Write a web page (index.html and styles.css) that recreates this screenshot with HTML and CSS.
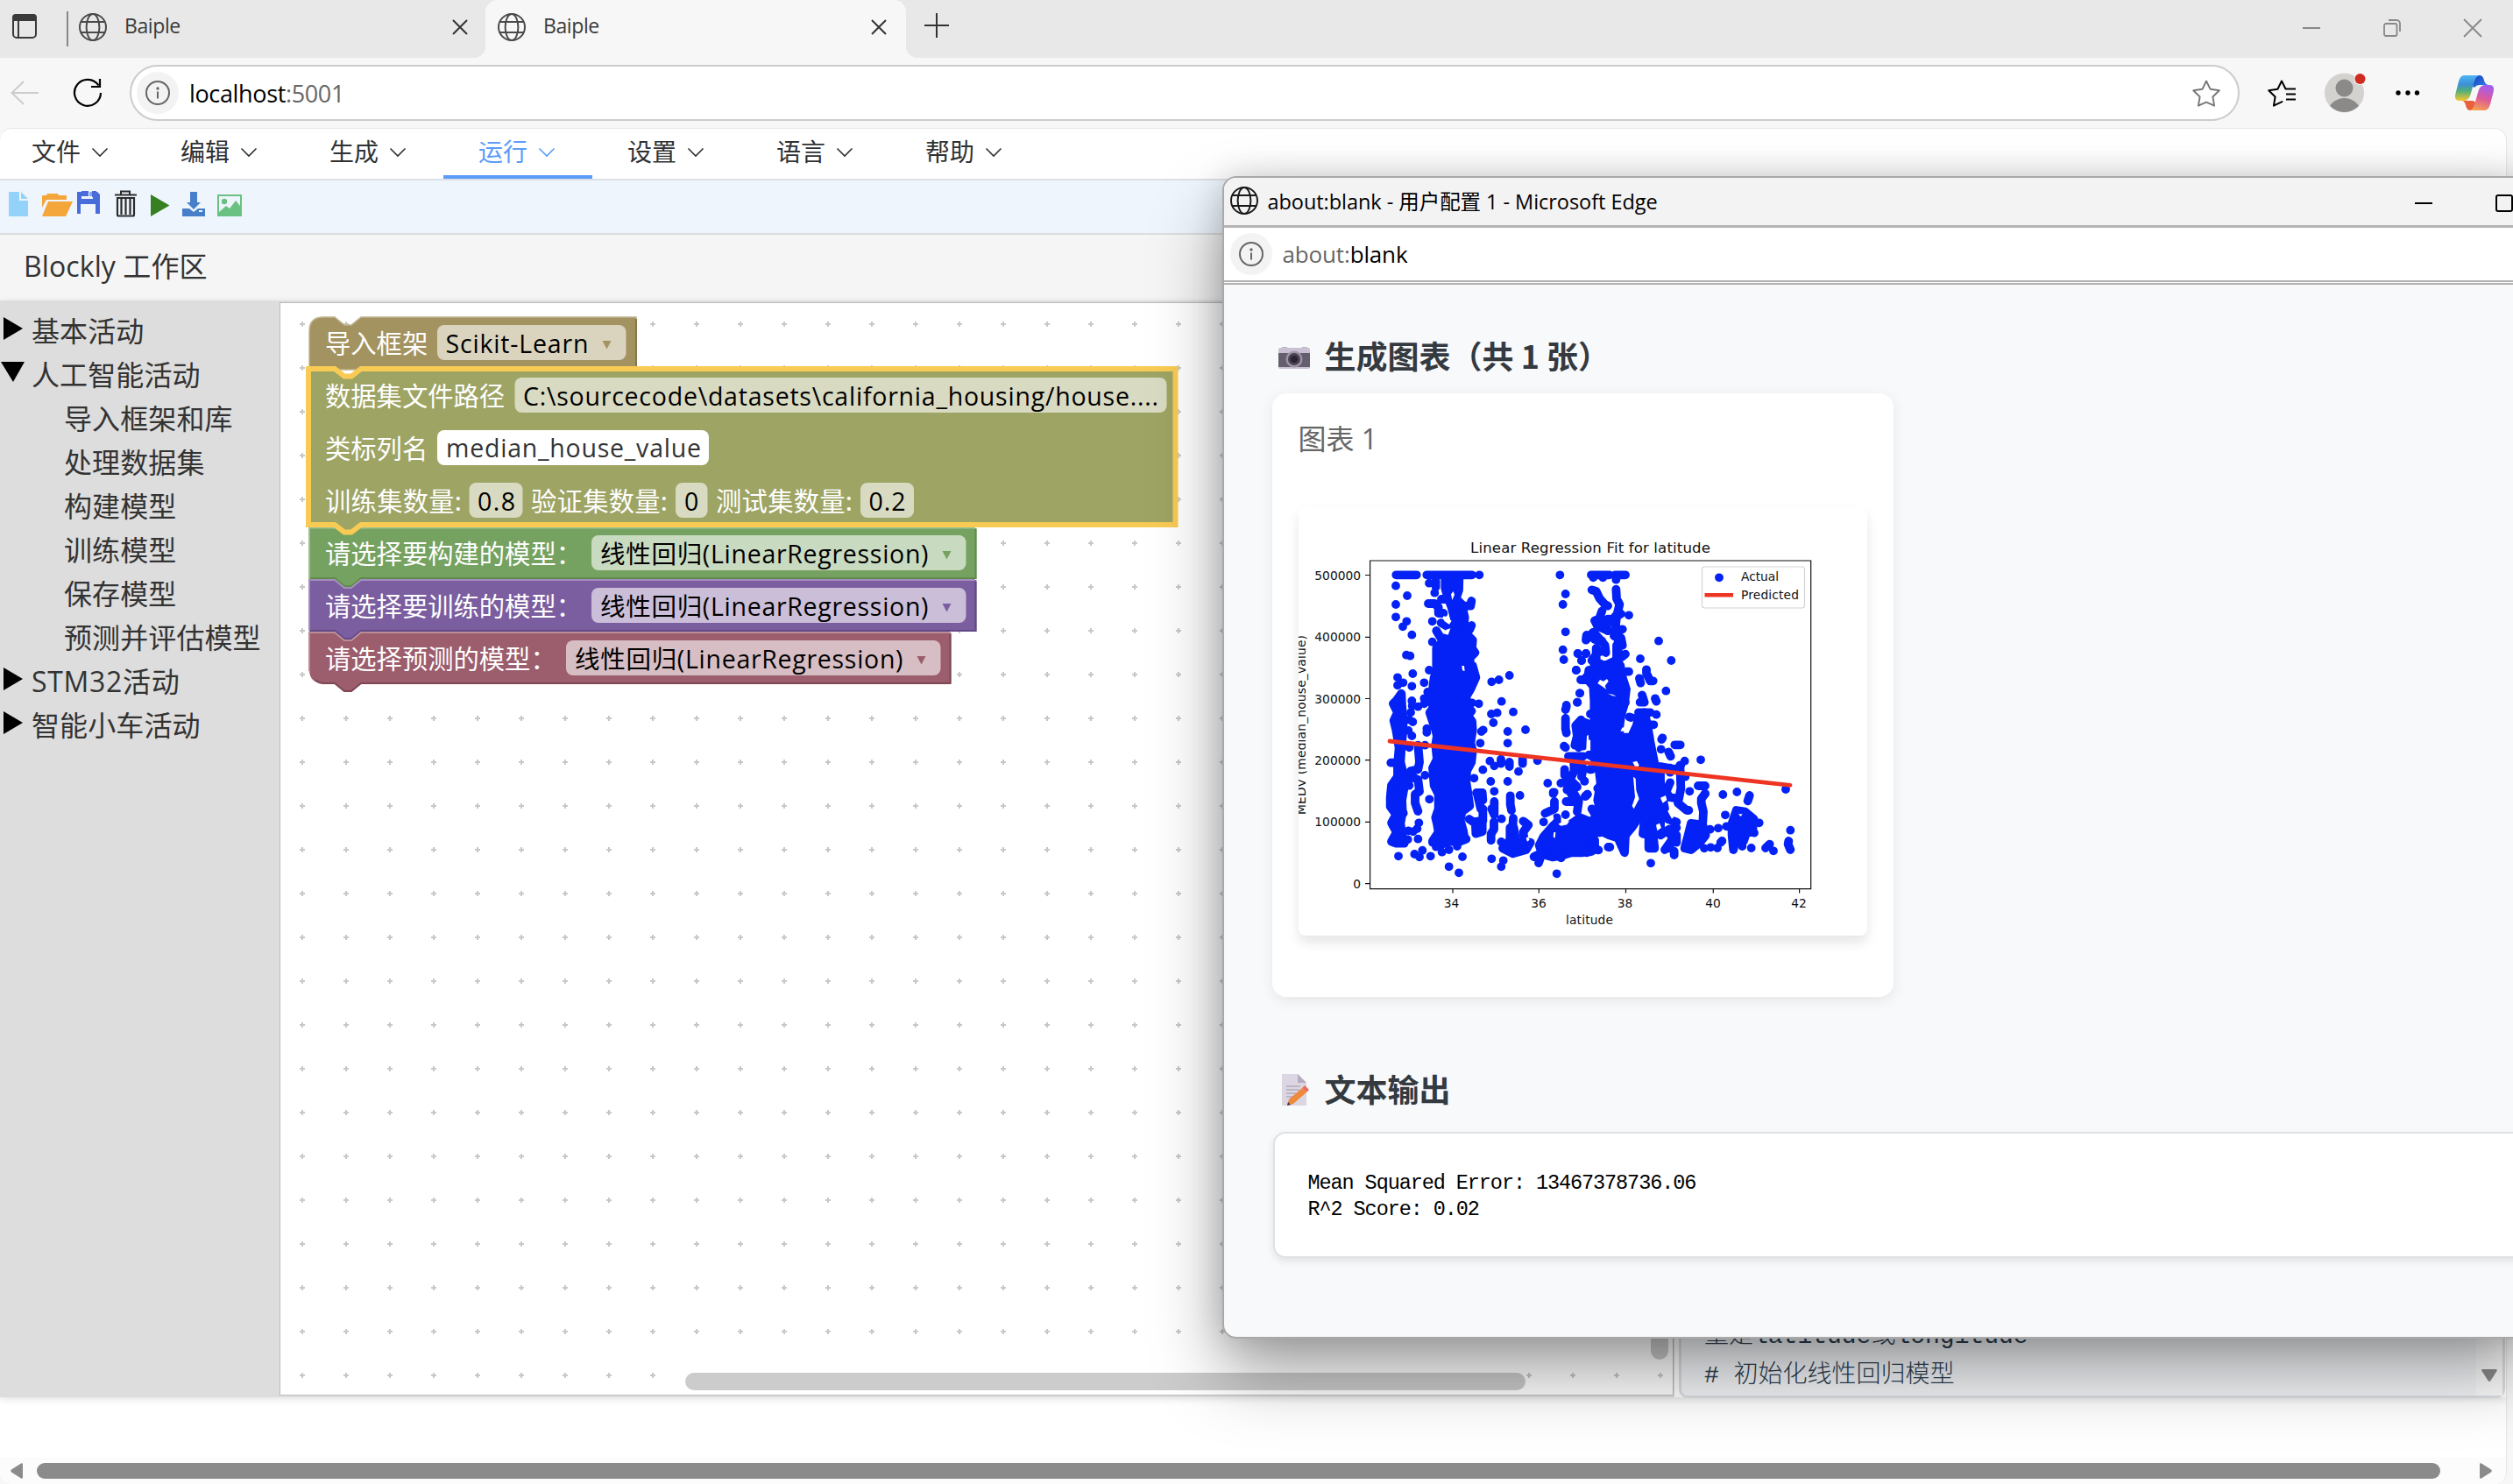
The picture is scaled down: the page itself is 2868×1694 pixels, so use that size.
FILE: index.html
```html
<!DOCTYPE html>
<html lang="zh-CN">
<head>
<meta charset="utf-8">
<title>Baiple</title>
<link rel="stylesheet" href="styles.css">
</head>
<body>
<svg class="defs" width="0" height="0" aria-hidden="true">
  <defs>
    <symbol id="globe" viewBox="0 0 32 32"><g fill="none" stroke="currentColor" stroke-width="2"><circle cx="16" cy="16" r="15"/><ellipse cx="16" cy="16" rx="7.4" ry="15"/><path d="M2.5 10h27M2.5 22h27"/></g></symbol>
    <symbol id="close" viewBox="0 0 20 20"><path d="M2 2l16 16M18 2L2 18" fill="none" stroke="currentColor" stroke-width="2"/></symbol>
    <symbol id="chev" viewBox="0 0 20 12"><path d="M1.5 1.5L10 10l8.500-8.500" fill="none" stroke="currentColor" stroke-width="1.600"/></symbol>
    <symbol id="info" viewBox="0 0 28 28"><circle cx="14" cy="14" r="13" fill="none" stroke="#666" stroke-width="2"/><circle cx="14" cy="9" r="1.700" fill="#666"/><path d="M14 12.500v8" stroke="#666" stroke-width="2"/></symbol>
  </defs>
</svg>
<div class="browser">
  <div class="tabstrip">
    <svg class="tabmenu" viewBox="0 0 28 28"><rect x="1" y="1" width="26" height="26" rx="4" fill="none" stroke="#3a3a3a" stroke-width="2"/><path d="M0 8V4a4 4 0 0 1 4-4h20a4 4 0 0 1 4 4v4z" fill="#3a3a3a"/><path d="M7 8v19" stroke="#3a3a3a" stroke-width="2"/></svg>
    <div class="tabrule"></div>
    <div class="tab first"><svg class="globe"><use href="#globe"/></svg><span>Baiple</span><svg class="x"><use href="#close"/></svg></div>
    <div class="tab active"><svg class="globe"><use href="#globe"/></svg><span>Baiple</span><svg class="x"><use href="#close"/></svg></div>
    <svg class="plus" viewBox="0 0 28 28"><path d="M14 0v28M0 14h28" stroke="#333" stroke-width="2"/></svg>
    <div class="winbtns">
      <svg viewBox="0 0 20 20"><path d="M0 10h20" stroke="#888" stroke-width="2"/></svg>
      <svg viewBox="0 0 20 20"><g fill="none" stroke="#888" stroke-width="1.800"><rect x="1" y="5" width="14.500" height="14" rx="2"/><path d="M6 1h9a4 4 0 0 1 4 4v9"/></g></svg>
      <svg viewBox="0 0 20 20"><path d="M0 0l20 20M20 0L0 20" stroke="#888" stroke-width="1.800"/></svg>
    </div>
  </div>
  <div class="navbar">
    <svg class="back" viewBox="0 0 32 28"><path d="M15 1L1.500 14 15 27M1.500 14H32" fill="none" stroke="#ccc" stroke-width="2"/></svg>
    <svg class="reload" viewBox="0 0 34 34"><path d="M32 17A15 15 0 1 1 29.500 8.500" fill="none" stroke="#000" stroke-width="2.200"/><path d="M31 1v9h-10" fill="none" stroke="#000" stroke-width="2.200"/></svg>
    <div class="omnibox">
      <div class="infodot"><svg><use href="#info"/></svg></div>
      <span class="url">localhost<em>:5001</em></span>
      <svg class="star" viewBox="0 0 32 31"><path d="M16 1.500l4.600 9.300 10.200 1.500-7.400 7.200 1.700 10.200L16 25.600l-9.100 4.100 1.700-10.200-7.400-7.200 10.200-1.500z" fill="none" stroke="#777" stroke-width="1.900" stroke-linejoin="round"/></svg>
    </div>
    <svg class="favs" viewBox="0 0 32 31"><path d="M20.500 10.500L16 1.500l-4.600 9.300-10.200 1.500 7.400 7.200-1.700 10.200 9.500-4.600" fill="none" stroke="#000" stroke-width="2" stroke-linejoin="round" stroke-linecap="round"/><path d="M21 10.500h11M21 16.500h11M21 22.500h11" stroke="#000" stroke-width="2"/></svg>
    <svg class="avatar" viewBox="0 0 48 46"><defs><clipPath id="av"><circle cx="22.500" cy="23" r="22"/></clipPath></defs><circle cx="22.500" cy="23" r="22.500" fill="#d3d2ce"/><circle cx="22.500" cy="17.500" r="10" fill="#8b8a88"/><ellipse cx="22.500" cy="44" rx="18" ry="15" fill="#8b8a88" clip-path="url(#av)"/><circle cx="40.500" cy="7" r="7" fill="#f7f7f7"/><circle cx="40.500" cy="7" r="6" fill="#cf2b20"/></svg>
    <svg class="dots" viewBox="0 0 28 8"><circle cx="3" cy="4" r="2.700"/><circle cx="14" cy="4" r="2.700"/><circle cx="24.500" cy="4" r="2.700"/></svg>
    <svg class="copilot" viewBox="0 0 44 40">
      <defs>
        <linearGradient id="c1" x1="0" y1="0" x2="0" y2="1"><stop offset="0" stop-color="#4cb6f5"/><stop offset=".35" stop-color="#3c8fd8"/><stop offset=".6" stop-color="#4fae7c"/><stop offset="1" stop-color="#f5c62e"/></linearGradient>
        <linearGradient id="c2" x1=".6" y1="0" x2=".3" y2="1"><stop offset="0" stop-color="#a45cf0"/><stop offset=".5" stop-color="#dc5a9a"/><stop offset="1" stop-color="#f7a24e"/></linearGradient>
        <linearGradient id="c3" x1="0" y1="0" x2="1" y2="1"><stop offset="0" stop-color="#173fc0"/><stop offset="1" stop-color="#2f86e8"/></linearGradient>
      </defs>
      <path d="M24 0h4q3 0 4.500 4 1.500 7 5.500 7H28q-4 0-6 3l-3-2z" fill="url(#c3)"/>
      <path d="M8 29h12l4 2-4 9h-3q-3 0-4.500-4-1.500-7-4.500-7z" fill="#e8603c"/>
      <path d="M10 0h18q-4.500 1-6 6.500L17.500 22q-2 7-7.500 7H5Q-1.500 29 .400 21L4 7q2-7 6-7z" fill="url(#c1)"/>
      <path d="M34 40H16q4.500-1 6-6.500L26.500 18q2-7 7.500-7h5q6.500 0 4.600 8L40 33q-2 7-6 7z" fill="url(#c2)"/>
    </svg>
  </div>
  <div class="page">
    <div class="menu">
      <div class="mi">文件<svg><use href="#chev"/></svg></div>
      <div class="mi">编辑<svg><use href="#chev"/></svg></div>
      <div class="mi">生成<svg><use href="#chev"/></svg></div>
      <div class="mi on">运行<svg><use href="#chev"/></svg></div>
      <div class="mi">设置<svg><use href="#chev"/></svg></div>
      <div class="mi">语言<svg><use href="#chev"/></svg></div>
      <div class="mi">帮助<svg><use href="#chev"/></svg></div>
    </div>
    <div class="toolbar">
      <svg viewBox="0 0 290 32">
        <path d="M10 3h12v10h10v18H10z" fill="#94d3f9"/><path d="M24 3l8 8h-8z" fill="#94d3f9"/>
        <path d="M48 8q0-1 1-1h4l1-2h12l1 2h9v5H53l-5 9z" fill="#f4a63a"/><path d="M55 14h28l-8 17H48z" fill="#f4a63a"/>
        <path d="M88 3h23l3 3v22h-5V17H92v11h-4z" fill="#486ddb"/><path d="M93 3h13v8H93z" fill="#eef5fd"/><path d="M93 2h8v6h-8zM105 2h5v7h-5z" fill="#486ddb"/><path d="M102 3h3v5h-3z" fill="#8ba3ea"/>
        <path d="M138 6V2.500h10V6M131 6.500h25" fill="none" stroke="#2c2c2c" stroke-width="2"/><path d="M134 10h19v19q0 1.500-1.500 1.500h-16q-1.500 0-1.500-1.500zM138.500 11v18M143.500 11v18M148.500 11v18" fill="none" stroke="#2c2c2c" stroke-width="2.200"/>
        <path d="M172 6l21.500 12.500L172 31z" fill="#378021"/>
        <path d="M217 3h8v12h4l-8 8-8-8h4z" fill="#477fcb"/><path d="M208 22h8l5 4 5-4h8v9h-26z" fill="#477fcb"/><path d="M227 24h4v2h-4z" fill="#eef5fd"/>
        <path d="M248 6h28v25h-28z" fill="#6bc181"/><path d="M250 8h24v11l-5-6-7 9-4-3-8 7z" fill="#eef5fd"/><circle cx="256" cy="14" r="3.200" fill="#6bc181"/>
      </svg>
    </div>
    <div class="wshead">Blockly 工作区</div>
    <div class="main">
      <div class="tree">
        <div class="row"><svg viewBox="0 0 30 30"><path d="M4 2l22 13L4 28z"/></svg>基本活动</div>
        <div class="row"><svg viewBox="0 0 30 30"><path d="M1 3h27L15 26z"/></svg>人工智能活动</div>
        <div class="row sub">导入框架和库</div>
        <div class="row sub">处理数据集</div>
        <div class="row sub">构建模型</div>
        <div class="row sub">训练模型</div>
        <div class="row sub">保存模型</div>
        <div class="row sub">预测并评估模型</div>
        <div class="row latin"><svg viewBox="0 0 30 30"><path d="M4 2l22 13L4 28z"/></svg>STM32活动</div>
        <div class="row"><svg viewBox="0 0 30 30"><path d="M4 2l22 13L4 28z"/></svg>智能小车活动</div>
      </div>
      <svg class="workspace" viewBox="320 346 1589 1246">
        <defs><pattern id="grid" x="320" y="345" width="50" height="50" patternUnits="userSpaceOnUse"><path d="M22 25h6M25 22v6" stroke="#c8c8c8" stroke-width="2"/></pattern></defs>
        <rect x="320" y="346" width="1589" height="1246" fill="#fff"/>
        <rect x="320" y="346" width="1589" height="1246" fill="url(#grid)"/>
        <rect x="782" y="1567" width="959" height="20" rx="10" fill="#ccc"/>
        <rect x="1884" y="700" width="20" height="852" rx="10" fill="#ccc"/>
        <g class="blk">
          <path class="hi" d="M353 420V378q0-16 16-16H382l11 9h8l11-9H726V422H353z" fill="#a39360" stroke="#c0b591"/>
          <path d="M726 364V420" stroke="#857848" stroke-width="2"/>
          <path d="M353 603H1114.500V661H412l-11 9h-8l-11-9H353z" fill="#76a261"/>
          <path d="M353 661V602.500H1113" stroke="#a0c092" stroke-width="2" fill="none"/>
          <path d="M1113.500 604V660H412l-11 9h-8l-11-9H354" stroke="#5f8a4c" stroke-width="2" fill="none"/>
          <path d="M353 662H382l11 9h8l11-9H1114.500V721H412l-11 9h-8l-11-9H353z" fill="#7b5e9f"/>
          <path d="M353 720V662H382l11 9h8l11-9H1113" stroke="#a38fbd" stroke-width="2" fill="none"/>
          <path d="M1113.500 664V720H412l-11 9h-8l-11-9H354" stroke="#624886" stroke-width="2" fill="none"/>
          <path d="M353 722H382l11 9h8l11-9H1085.500V780H412l-11 9h-8l-11-9H369q-16 0-16-16z" fill="#9c5d6c"/>
          <path d="M353 766V722H382l11 9h8l11-9H1084" stroke="#ba8d98" stroke-width="2" fill="none"/>
          <path d="M1084.500 724V780H412l-11 9h-8l-11-9H369q-5 0-9-4" stroke="#7f4654" stroke-width="2" fill="none"/>
          <path d="M352 421H382l11 8.500h8l11-8.500H1341.500V599H412l-11 8.500h-8l-11-8.500H352z" fill="#9ea464" stroke="#f9cb55" stroke-width="6"/>
          <g fill="#fff" fill-opacity=".6">
            <rect x="499" y="371" width="215.500" height="40" rx="8"/>
            <rect x="587.500" y="431" width="744" height="40" rx="8"/>
            <rect x="499" y="491" width="310" height="40" rx="8" fill-opacity="1"/>
            <rect x="535.500" y="551" width="61" height="40" rx="8"/>
            <rect x="771" y="551" width="36.500" height="40" rx="8"/>
            <rect x="982" y="551" width="61" height="40" rx="8"/>
            <rect x="675" y="611" width="427.500" height="40" rx="8"/>
            <rect x="675" y="671" width="427.500" height="40" rx="8"/>
            <rect x="646" y="731" width="427.500" height="40" rx="8"/>
          </g>
          <path d="M687.500 389h10l-5 9.500z" fill="#a39360"/>
          <path d="M1075.500 629h10l-5 9.500z" fill="#76a261"/>
          <path d="M1075.500 689h10l-5 9.500z" fill="#7b5e9f"/>
          <path d="M1046.500 749h10l-5 9.500z" fill="#9c5d6c"/>
          <g class="lbl">
            <text x="371" y="403">导入框架</text>
            <text x="371" y="463">数据集文件路径</text>
            <text x="371" y="523">类标列名</text>
            <text x="371" y="583" textLength="156">训练集数量:</text>
            <text x="606" y="583" textLength="156">验证集数量:</text>
            <text x="817" y="583" textLength="156">测试集数量:</text>
            <text x="371" y="643">请选择要构建的模型：</text>
            <text x="371" y="703">请选择要训练的模型：</text>
            <text x="371" y="763">请选择预测的模型：</text>
          </g>
          <g class="val">
            <text x="508.500" y="403" textLength="163">Scikit-Learn</text>
            <text x="597" y="463" textLength="725">C:\sourcecode\datasets\california_housing/house....</text>
            <text x="509" y="522" textLength="291" fill="#333">median_house_value</text>
            <text x="545" y="583" textLength="43">0.8</text>
            <text x="781" y="583">0</text>
            <text x="991.500" y="583" textLength="42">0.2</text>
            <text x="685" y="643" textLength="374.500">线性回归(LinearRegression)</text>
            <text x="685" y="703" textLength="374.500">线性回归(LinearRegression)</text>
            <text x="656" y="763" textLength="374.500">线性回归(LinearRegression)</text>
          </g>
        </g>
      </svg>
      <div class="code"><div class="lines"><div>量是latitude或longitude</div><div># 初始化线性回归模型</div></div><div class="codebar"><svg viewBox="0 0 18 14"><path d="M1.500 0h15q2 0 1 2L10.500 13q-1.500 2-3 0L.500 2q-1-2 1-2z" fill="#8b8b8b"/></svg></div></div>
    </div>
    <div class="below"></div>
    <div class="hscroll">
      <svg viewBox="0 0 14 18"><path d="M14 1.500v15q0 2-2 1L1 10.500q-1.500-1.500 0-3L12 .500q2-1 2 1z" fill="#8b8b8b"/></svg>
      <div class="thumb"></div>
      <svg viewBox="0 0 14 18"><path d="M0 1.500v15q0 2 2 1l11-7q1.500-1.500 0-3L2 .500q-2-1-2 1z" fill="#8b8b8b"/></svg>
    </div>
  </div>
</div>

<div class="popup">
  <div class="ptitle"><svg class="globe"><use href="#globe"/></svg><span>about:blank - 用户配置 1 - Microsoft Edge</span>
    <svg class="pmin" viewBox="0 0 20 20"><path d="M0 10h20" stroke="#000" stroke-width="2"/></svg>
    <svg class="pmax" viewBox="0 0 20 20"><rect x="1" y="1" width="18" height="18" rx="2" fill="none" stroke="#000" stroke-width="2"/></svg>
  </div>
  <div class="purl"><div class="infodot"><svg><use href="#info"/></svg></div><span><em>about:</em>blank</span></div>
  <div class="pbody">
    <h2><svg class="emoji" viewBox="0 0 36 36"><path d="M4 5h6v3H4zM27 5h6v3h-6z" fill="#bdb4c6"/><rect x="0" y="6" width="36" height="24" rx="2" fill="#c9c0d3"/><rect x="0" y="12" width="36" height="16" fill="#655f6d"/><circle cx="18" cy="19" r="9.500" fill="#9d94a8"/><circle cx="18" cy="19" r="7" fill="#4a4252"/><circle cx="18" cy="19" r="4" fill="#2b2433"/></svg><span>生成图表（共 1 张）</span></h2>
    <div class="card">
      <div class="cap">图表 1</div>
      <div class="figure">
        <svg viewBox="1482 579 649 489">
          <g fill="none" stroke="#0422f6" stroke-width="29.500" stroke-linecap="round" stroke-linejoin="round">
            <g transform="translate(1560 640) scale(.33333)">
              <path d="M100 49H170M205 49H360M385 49h0M99 86h0M138 120h0M99 150h0M99 193h0M136 208h0M123 226h0M154 254h0M135 323h0M148 326h0M157 387h0M105 400h0M105 427h0M124 418h0M154 430h0M196 418h0M154 480h0M155 497h0M175 500h0M150 520h0M145 545h0M157 552h0M142 582h0M154 600h0M145 640h0M108 1012h0M140 955h0M142 925h0M125 865h0"/>
              <path fill="#0422f6" d="M100 480L118 455 120 500 125 545 122 600 118 640 115 690 125 730 128 775 120 820 122 860 115 900 120 935 128 968 100 968 84 962 102 930 84 898 100 870 80 842 80 812 84 770 105 740 105 700 110 640 100 580 92 548 105 520 90 490z"/>
              <path d="M82 692H110M145 770L130 745M175 632L180 690 175 715 150 720 130 745M150 740L175 750 180 790 165 800 165 830 175 858M178 898h0M172 918h0M158 928h0M175 953h0M199 735h0M163 1005h0M180 1015h0M190 992h0M218 1012h0M214 817h0M199 632h0M205 575h0M205 588h0M196 472h0M196 490h0M208 450h0M213 375h0"/>
              <path fill="#0422f6" d="M268 60L316 60 315 100 305 130 325 150 335 195 330 240 362 272 360 300 370 315 355 330 350 360 362 360 373 400 355 440 340 465 345 500 358 515 345 530 360 550 362 580 355 625 362 650 358 690 342 720 340 760 345 790 352 840 325 860 320 890 330 925 335 955 310 965 280 960 250 975 225 960 245 930 240 900 235 880 245 850 245 800 230 770 225 710 240 680 235 630 240 600 235 580 215 520 230 500 218 485 225 440 230 400 238 380 238 330 238 300 260 275 290 240 300 200 290 160 275 120 268 95z"/>
              <path d="M213 77h0M236 70V90M232 110h0M210 147H232L245 160V180H262M255 132H280M224 208h0M254 213L275 225M238 240L250 260M224 278h0M358 138L355 155H335M358 222L352 235H330M383 490h0M360 487h0M388 625h0M392 585h0M398 580h0M367 745h0M397 716h0M421 686h0M424 756h0M436 790h0M281 990h0M257 998h0M237 980h0M281 1048h0M315 1069h0M327 1014h0M309 978h0M225 965h0M340 953h0"/>
              <path d="M427 415h0M452 408h0M488 393h0M461 482h0M501 518h0M426 525h0M446 521h0M433 555h0M482 585h0M543 579h0M482 625h0M436 703h0M459 680V695M488 690V705M533 680V695M519 722h0M584 685h0M482 756h0M524 804h0M461 884h0M375 795H395L397 820M378 800L390 850M397 850V890L365 895 350 885M372 910L373 935 395 928M395 900V925M436 825V870L427 850M435 895V920L425 935V958M427 1021h0M467 1027h0M460 1048h0M491 805V835L495 855M501 882L498 930 490 960M535 892L553 905 535 930 538 950"/>
              <path fill="#0422f6" d="M465 985L485 962 560 965 545 990 500 1003zM490 915L503 915 510 960 490 960zM590 975L605 945 640 905 680 915 730 880 780 900 780 990 735 1000 700 1000 665 1010 635 1015 600 1005z"/>
              <path d="M460 963h0M572 1014L600 1000 588 1035M605 895h0M619 762h0M638 798V793h3M642 825V850L610 865M650 880V905M680 870h0M664 762h0M677 715V735M680 640L675 635M661 1015h0M700 800L690 780 680 755M661 49h0M680 114h0M671 150h0M680 244h0M671 305h0M674 339h0M722 318h0M750 318h0M735 342h0M716 375h0M735 408h0M729 454h0M720 485h0M683 495V500L680 510M680 540V575l3 15M733 545L715 565 720 600 712 632M735 550L760 560V600M740 560V635M725 590V640M708 680L710 720 695 750 720 775 685 785M720 690L740 710 735 740M745 755h0M755 800L747 807M682 825H725L720 860M705 790L725 825M765 715h0M690 670H740M650 1072h0"/>
            </g>
            <g transform="translate(1780 640) scale(.33333)">
              <path d="M108 49H170M115 58h0M148 58h0M190 49H225M193 65h0M110 100L125 105 137 130 155 150 165 155M145 172L135 200 120 205 130 225 155 235 165 240M145 220V200M193 98L195 130 205 150 195 190 210 182M237 187h0M190 190L185 205 170 200M195 190L190 240 215 235M186 258L210 265 215 290 195 290V330H212L225 320M200 240V380M92 255L90 272 115 245 140 272 155 290 158 315M120 270L145 275M165 200L160 235M110 342L130 315 155 305M125 300V350"/>
              <path fill="#0422f6" d="M120 345L155 360 195 340 208 360 215 400 228 440 222 490 210 530 205 570 205 605 245 605 265 560 290 520 300 560 310 620 322 680 330 720 345 760 350 800 330 850 300 880 270 880 250 910 225 940 222 1000 200 950 170 940 150 930 120 900 140 860 130 820 140 760 135 720 120 680 120 620 118 560 118 480 115 430 90 400 115 380z"/>
              <path fill="#0422f6" d="M300 850L340 850 345 900 320 940 325 985 305 985 305 940 285 935 290 890z"/>
              <path d="M230 380h7M225 485h0M105 525h15M238 535L262 543M110 850L125 875 100 905 118 940 140 930M345 705L400 715 415 700M428 686h0M320 800L350 800 360 850 370 885 400 895M412 700L415 780 405 830 435 855h7M378 710V725M345 720V770M378 760L365 790 375 810 405 815M430 740h-15M345 940L375 920 400 915M380 940H400V965M360 990L385 955 375 985M392 995V1008M345 900V940M130 780h0M110 715h-8M85 755h0M95 800l-5 6M120 675L100 665M339 275h0M382 342h0M276 336h0M297 373V385L310 412H320M273 403l4 16M364 446h0M282 460L290 485H275M327 472l4 10M331 527h0M322 562H300M270 520H310M352 607l-3 5M347 646h0M394 631h19M373 655l7 15M483 682h0M474 771H498M498 798h0M445 790h0M57 375h0M62 318h0M90 318h0M75 342h0M69 454h0M61 485h0M72 408H95L100 375M15 925L30 985"/>
              <path fill="#0422f6" d="M450 900L490 905 500 940 480 965 450 990 428 985 440 940zM605 855L635 860 665 885 660 930 640 930 630 960 600 960 595 990 590 940 590 900z"/>
              <path d="M498 798L485 815V830L492 860 490 895M515 920h0M495 985h0M517 982h0M540 984h0M556 960l-5 5M543 916h0M571 910H590M567 871h0M683 898h0M650 885h0M656 984h0M625 978h0M666 932h0M774 783h0M790 923h0M784 960L782 971 790 990M719 971L705 984M732 994h0M559 801h0M607 792h0M650 804L644 823M312 1036h0M166 981h6M125 988l8 3M110 995L92 1000M5 1018h0"/>
            </g>
          </g>
          <g fill="#fff" transform="translate(1560 640) scale(.33333)"><path d="M288 115l8-10 4 12-8 18zM262 190l10 2 18 14-8 12-16-10-6-10zM262 250l10-14 14-4-8 22zM325 360l8 0 2 18-8-2zM628 878l10-6 2 14-14 8zM655 902l20-12 18 2-8 12-20 4zM545 950l6-4 6 10-8 6zM640 930l6 0-2 20-6-4z"/></g>
          <g fill="#fff" transform="translate(1780 640) scale(.33333)"><path d="M130 420l8-12 12 5 12-8 5 8-12 16 5 12-8-6zM165 455l16 3 14 6-14-1zM208 584l6-12 14-4 12-12 12-8-6 18-12 20-12-2zM250 690l14-4 8 14-8 14-6-8zM252 740l8 6 2 40 10 30-18 34-6-10 10-30zM345 812l18-8 4 16-14 10zM370 858l10-14 14 4 8 16-10 12-8 8zM330 905l12-6 6 16-14 10zM93 600l5-4 4 34-5 22-6-8zM130 945l12 2 12 12-16 2zM612 868l14 0-6 8z"/></g>
          <path d="M1586 846L2043 896.300" stroke="#ee3423" stroke-width="4.800" stroke-linecap="round"/>
          <path d="M1563.600 640H2066.700V1014.600H1563.600z" fill="none" stroke="#111" stroke-width="1.200"/>
          <path d="M1558 656.500h5.600M1558 727.300h5.600M1558 797.500h5.600M1558 867.700h5.600M1558 938.300h5.600M1558 1008.700h5.600M1658 1014.600v5M1756.300 1014.600v5M1855.500 1014.600v5M1955.300 1014.600v5M2053.600 1014.600v5" stroke="#111" stroke-width="1.200"/>
          <rect x="1942.500" y="647" width="117" height="47" rx="3" fill="#fff" stroke="#d4d4d4" stroke-width="1.200"/>
          <circle cx="1962" cy="659.300" r="4.900" fill="#0422f6"/>
          <path d="M1945.500 679.300H1978" stroke="#ee3423" stroke-width="4.600"/>
          <g class="plt">
            <text x="1987" y="662.700" textLength="43">Actual</text><text x="1987" y="684" textLength="66">Predicted</text>
            <g text-anchor="end"><text x="1553" y="661.500">500000</text><text x="1553" y="732.300">400000</text><text x="1553" y="802.500">300000</text><text x="1553" y="872.700">200000</text><text x="1553" y="943.300">100000</text><text x="1553" y="1013.700">0</text></g>
            <g text-anchor="middle"><text x="1656.500" y="1035.700">34</text><text x="1756" y="1035.700">36</text><text x="1854.500" y="1035.700">38</text><text x="1955" y="1035.700">40</text><text x="2053" y="1035.700">42</text><text x="1814" y="1055" textLength="54">latitude</text><text class="t" x="1815" y="631" textLength="274">Linear Regression Fit for latitude</text></g>
            <text transform="translate(1489.500 930) rotate(-90)" textLength="205">MEDV (median_house_value)</text>
          </g>
        </svg>
      </div>
    </div>
    <h2 class="second"><svg class="emoji" viewBox="0 0 36 36"><path d="M4 0h18l10 10v26H4z" fill="#dcd6e3"/><path d="M22 0l10 10H22z" fill="#b5adbf"/><path d="M9 14h16M9 18h15M9 22h11M9 26h8" stroke="#9b93a5" stroke-width="1.200"/><path d="M10 36l2-7L27 16l5 5-15 13z" fill="#ee8a3d"/><path d="M27 16l3-3 5 5-3 3z" fill="#ee6a5f"/><path d="M10 36l1-4 3 3z" fill="#4a3540"/></svg><span>文本输出</span></h2>
    <pre class="out">Mean Squared Error: 13467378736.06
R^2 Score: 0.02</pre>
  </div>
</div>
</body>
</html>
```
FILE: styles.css
```css
* { box-sizing: border-box; }
body { margin: 0; width: 2868px; height: 1694px; overflow: hidden; position: relative; background: #f7f7f7; font-family: "Open Sans", "Noto Sans CJK SC", sans-serif; color: #303133; }
svg { display: block; flex: none; }
em { font-style: normal; }
.defs { position: absolute; }
.browser { display: flex; flex-direction: column; height: 1694px; }

.tabstrip { height: 66px; background: #e8e8e8; display: flex; align-items: flex-start; color: #3b3b3b; }
.tabmenu { width: 28px; height: 28px; margin: 16px 0 0 14px; }
.tabrule { width: 2px; height: 40px; background: #888; margin: 13px 0 0 34px; }
.tab { display: flex; height: 66px; align-items: center; font-size: 23px; letter-spacing: -.4px; padding-bottom: 5px; }
.tab .globe { width: 32px; height: 32px; color: #4a4a4a; }
.tab .x { width: 20px; height: 20px; margin-left: auto; color: #333; }
.tab span { margin: -3px 0 0 20px; }
.tab.first { width: 476px; padding-left: 12px; padding-right: 19px; }
.tab.active { width: 480px; background: #f7f7f7; border-radius: 14px 14px 0 0; padding-left: 14px; padding-right: 21px; position: relative; }
.tab.active::before, .tab.active::after { content: ""; position: absolute; bottom: 0; width: 14px; height: 14px; }
.tab.active::before { left: -14px; background: radial-gradient(circle at 0 0, #e8e8e8 14px, #f7f7f7 14.500px); }
.tab.active::after { right: -14px; background: radial-gradient(circle at 100% 0, #e8e8e8 14px, #f7f7f7 14.500px); }
.plus { width: 28px; height: 28px; margin: 15px 0 0 21px; }
.winbtns { margin: 22px 36px 0 auto; display: flex; gap: 72px; }
.winbtns svg { width: 20px; height: 20px; overflow: visible; }

.navbar { height: 80px; display: flex; align-items: center; }
.back { width: 32px; height: 28px; margin-left: 12px; }
.reload { width: 34px; height: 34px; margin-left: 39px; }
.omnibox { width: 2408px; height: 64px; margin-left: 31px; border: 2px solid #ccc; border-radius: 32px; background: #fff; display: flex; align-items: center; padding: 0 20px 0 6px; }
.infodot { width: 48px; height: 48px; border-radius: 50%; background: #f3f3f3; display: flex; align-items: center; justify-content: center; flex: none; }
.infodot svg { width: 28px; height: 28px; }
.url { font-size: 27px; letter-spacing: -.350px; margin-left: 12px; color: #000; }
.url em, .purl em { color: #666; }
.star { width: 32px; height: 31px; margin-left: auto; }
.favs { width: 32px; height: 31px; margin-left: 32px; }
.avatar { width: 48px; height: 46px; margin-left: 33px; }
.dots { width: 28px; height: 8px; margin-left: 33px; }
.copilot { width: 44px; height: 40px; margin-left: 40px; }

.page { width: 2861px; height: 1548px; background: #fff; border: 1px solid #e6e6e6; border-left: 0; border-bottom: 0; border-radius: 14px; overflow: hidden; display: flex; flex-direction: column; }
.menu { height: 59px; flex: none; border-bottom: 2px solid #dcdfe6; display: flex; }
.mi { width: 170px; height: 57px; padding: 0 0 7px 36px; font-size: 28px; display: flex; align-items: center; }
.mi svg { width: 20px; height: 12px; margin: 4px 0 0 12px; }
.menu .mi.on { color: #5a9cf8; border-bottom: 4px solid #5a9cf8; padding-bottom: 3px; margin-left: -4px; padding-left: 40px; width: 170px; margin-right: 4px; }
.toolbar { height: 62px; flex: none; background: #eef5fd; border-bottom: 2px solid #ddd; padding-top: 10px; }
.toolbar svg { width: 290px; height: 32px; }
.wshead { height: 75px; flex: none; background: #f5f5f5; font-size: 32px; line-height: 72px; letter-spacing: .100px; padding-left: 27px; color: #333; }
.main { height: 1252px; flex: none; display: flex; box-shadow: 0 2px 8px rgba(0,0,0,.12); background: linear-gradient(90deg, #ddd 1911px, #fff 1911px); }
.tree { width: 320px; padding-top: 10px; color: #333; }
.row { height: 50px; display: flex; align-items: center; font-size: 32px; line-height: 50px; letter-spacing: .100px; }
.row.latin { letter-spacing: .700px; }
.row svg { width: 30px; height: 30px; margin: -6px 6px 0 0; }
.row.sub { padding-left: 73px; }
.workspace { width: 1589px; height: 1246px; margin-top: 3px; outline: 1px solid #bbb; }
.blk .hi { stroke-width: 1.500; }
.lbl { fill: #fff; font: 400 29.300px "Noto Sans CJK SC", sans-serif; }
.val { fill: #000; font: 28.500px "Open Sans", "Noto Sans CJK SC", sans-serif; }
.code { width: 943px; height: 1253px; margin-left: 7px; background: #f5f7fa; border: 3px solid #dcdfe3; border-radius: 0 0 10px 10px; display: flex; align-items: flex-end; font: 300 28px/45px "Liberation Mono", "Noto Sans CJK SC", monospace; color: #2c3e50; }
.lines { padding: 0 0 0 26px; flex: 1; white-space: pre; }
.codebar { width: 30px; height: 1246px; background: #fcfcfc; display: flex; align-items: flex-end; padding: 0 0 16px 6px; }
.codebar svg { width: 18px; height: 14px; }
.below { flex: 1; }
.hscroll { height: 30px; flex: none; background: #fcfcfc; display: flex; align-items: center; padding: 0 16px 0 12px; justify-content: space-between; }
.hscroll svg { width: 14px; height: 18px; }
.thumb { width: 2743px; height: 18px; border-radius: 9px; background: #8b8b8b; margin-right: 29px; }

.popup { position: absolute; left: 1394.500px; top: 201px; width: 1490px; height: 1327px; border: 2px solid #a9a9a9; border-radius: 16px; overflow: hidden; background: #f8f9fb; box-shadow: 0 40px 80px rgba(0,0,0,.36), 0 0 36px rgba(0,0,0,.16); display: flex; flex-direction: column; }
.ptitle { height: 57px; flex: none; background: #f3f3f3; border-bottom: 3px solid #b4b4b4; display: flex; align-items: center; padding-left: 7px; font-size: 23.500px; color: #000; }
.ptitle .globe { width: 32px; height: 32px; color: #1a1a1a; margin-top: -3px; }
.ptitle span { margin: -2px 0 0 11px; letter-spacing: -.050px; white-space: nowrap; }
.pmin { width: 20px; height: 20px; margin-left: auto; margin-right: 72px; margin-top: 3px; }
.pmax { width: 20px; height: 20px; margin-right: 15px; margin-top: 3px; }
.purl { height: 65px; flex: none; background: #fff; border-bottom: 5px double #b0b0b0; display: flex; align-items: center; padding-left: 7px; font-size: 26px; letter-spacing: -.150px; color: #000; }
.purl span { margin-left: 12px; }
.pbody { padding: 53px 0 0 56px; display: flex; flex-direction: column; }
h2 { margin: 0 0 17px; height: 54px; display: flex; align-items: center; font-size: 36px; line-height: 54px; font-weight: 700; color: #343a40; padding-left: 6px; font-family: "Noto Sans CJK SC", sans-serif; }
.emoji { width: 36px; height: 36px; margin: 8px 17px 0 0; }
.card { width: 709px; height: 689px; background: #fff; border-radius: 16px; box-shadow: 0 4px 16px rgba(0,0,0,.08); padding: 29px 30px 0; margin-left: -1px; }
.cap { font-size: 32px; line-height: 46px; height: 46px; color: #666; }
.figure { width: 649px; height: 489px; margin-top: 55px; border-radius: 8px; background: #fff; box-shadow: 0 8px 14px rgba(0,0,0,.1); overflow: hidden; }
.figure svg { width: 649px; height: 489px; }
.plt { font: 13.800px "DejaVu Sans", sans-serif; fill: #111; }
.plt .t { font-size: 16.600px; }
.second { margin: 77px 0 23px; }
.second .emoji { margin-top: 3px; }
.out { margin: 0; width: 1460px; height: 144px; background: #fff; border: 2px solid #dee2e6; border-radius: 14px; box-shadow: 0 4px 10px rgba(0,0,0,.09); padding: 42px 38px; font: 23.500px/30px "Liberation Mono", monospace; letter-spacing: -1.080px; color: #000; }
```
